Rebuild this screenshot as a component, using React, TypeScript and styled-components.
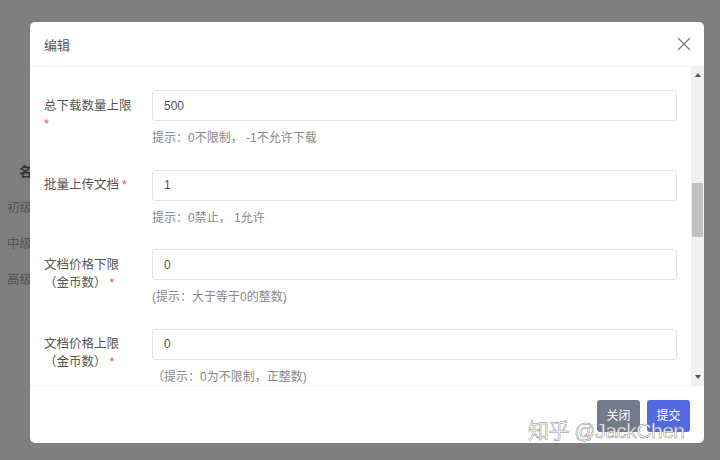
import React from "react"
import styled, { createGlobalStyle } from "styled-components"

const GlobalStyle = createGlobalStyle`
  html, body {
    margin: 0;
    padding: 0;
    width: 720px;
    height: 460px;
    overflow: hidden;
    background: #fff;
    font-family: "Liberation Sans", "Noto Sans CJK SC", sans-serif;
  }
`

const Page = styled.div`
  position: relative;
  width: 720px;
  height: 460px;
  overflow: hidden;
`

const BackTable = styled.div`
  display: flex;
  flex-direction: column;
  padding: 161px 0 0 7px;
  gap: 17px;
  font-size: 12.5px;
  color: #a6a6a6;
`

const BackHead = styled.div`
  padding-left: 12px;
  font-weight: bold;
  font-size: 13px;
  color: #666;
`

const Overlay = styled.div`
  position: absolute;
  inset: 0;
  background: rgba(0, 0, 0, 0.5);
  display: flex;
  padding: 22px 16px 17px 30px;
`

const Modal = styled.div`
  flex: 1;
  display: flex;
  flex-direction: column;
  background: #fff;
  border-radius: 5px;
  overflow: hidden;
`

const Header = styled.div`
  height: 44px;
  display: flex;
  align-items: center;
  justify-content: space-between;
  padding: 0 12px 0 14px;
  border-bottom: 1px solid #f2f2f2;
`

const Title = styled.span`
  font-size: 13px;
  color: #555;
`

const CloseBtn = styled.button`
  border: none;
  background: none;
  padding: 0;
  width: 16px;
  height: 16px;
  display: flex;
  align-items: center;
  justify-content: center;
  cursor: pointer;
`

const Body = styled.div`
  flex: 1;
  display: flex;
  min-height: 0;
`

const Content = styled.div`
  flex: 1;
  overflow: hidden;
  padding: 23px 14px 0 14px;
`

const Scrollbar = styled.div`
  width: 13px;
  background: #f1f1f1;
  display: flex;
  flex-direction: column;
  align-items: center;
  padding: 6px 0;
  box-sizing: border-box;
`

const Arrow = styled.div<{ $down?: boolean }>`
  width: 0;
  height: 0;
  border-left: 3px solid transparent;
  border-right: 3px solid transparent;
  ${(p) => (p.$down ? "border-top: 4px solid #505050;" : "border-bottom: 4px solid #505050;")}
`

const Track = styled.div`
  flex: 1;
  width: 100%;
  padding: 106px 1px 0;
  box-sizing: border-box;
`

const Thumb = styled.div`
  height: 54px;
  background: #c1c1c1;
`

const FormItem = styled.div`
  display: grid;
  grid-template-columns: 108px 1fr;
  margin-bottom: 22.5px;
`

const Label = styled.div`
  font-size: 12.5px;
  line-height: 18px;
  color: #555;
  padding-top: 6.5px;
`

const Star = styled.span<{ $flush?: boolean }>`
  color: #e0505a;
  margin-left: ${(p) => (p.$flush ? 0 : 3)}px;
`

const Field = styled.div`
  display: flex;
  flex-direction: column;
`

const Input = styled.input`
  height: 31px;
  box-sizing: border-box;
  border: 1px solid #e4e4e4;
  border-radius: 3px;
  padding: 0 11px;
  font-family: inherit;
  font-size: 12px;
  color: #555;
  outline: none;
`

const Hint = styled.div`
  margin-top: 8px;
  font-size: 12px;
  line-height: 18px;
  color: #888;
`

const Footer = styled.div`
  height: 58px;
  box-sizing: border-box;
  border-top: 1px solid #eee;
  display: flex;
  justify-content: flex-end;
  align-items: flex-start;
  gap: 7px;
  padding: 14px 14px 0 0;
`

const Button = styled.button<{ $primary?: boolean }>`
  width: 43px;
  height: 32px;
  border: none;
  border-radius: 3px;
  padding-bottom: 4px;
  font-family: inherit;
  font-size: 12px;
  color: #fff;
  background: ${(p) => (p.$primary ? "#5468e2" : "#737a8b")};
  cursor: pointer;
`

const Watermark = styled.div`
  position: absolute;
  left: 528px;
  top: 414px;
  font-size: 21px;
  color: rgba(255, 255, 255, 0.92);
  -webkit-text-stroke: 0.5px #8a8a8a;
  letter-spacing: -0.5px;
  white-space: nowrap;
  pointer-events: none;
`

type Item = {
  label: React.ReactNode
  value: string
  hint: string
}

const items: Item[] = [
  { label: <>总下载数量上限<br /><Star $flush>*</Star></>, value: "500", hint: "提示：0不限制， -1不允许下载" },
  { label: <>批量上传文档<Star>*</Star></>, value: "1", hint: "提示：0禁止， 1允许" },
  { label: <>文档价格下限<br />（金币数）<Star>*</Star></>, value: "0", hint: "(提示：大于等于0的整数)" },
  { label: <>文档价格上限<br />（金币数）<Star>*</Star></>, value: "0", hint: "（提示：0为不限制，正整数)" },
]

export default function App() {
  return (
    <Page>
      <GlobalStyle />
      <BackTable>
        <BackHead>名</BackHead>
        <div>初级</div>
        <div>中级</div>
        <div>高级</div>
      </BackTable>
      <Overlay>
        <Modal>
          <Header>
            <Title>编辑</Title>
            <CloseBtn aria-label="关闭">
              <svg width="14" height="14" viewBox="0 0 14 14">
                <path d="M1 1L13 13M13 1L1 13" stroke="#808080" strokeWidth="1.4" fill="none" />
              </svg>
            </CloseBtn>
          </Header>
          <Body>
            <Content>
              {items.map((it, i) => (
                <FormItem key={i}>
                  <Label>{it.label}</Label>
                  <Field>
                    <Input defaultValue={it.value} />
                    <Hint>{it.hint}</Hint>
                  </Field>
                </FormItem>
              ))}
            </Content>
            <Scrollbar>
              <Arrow />
              <Track>
                <Thumb />
              </Track>
              <Arrow $down />
            </Scrollbar>
          </Body>
          <Footer>
            <Button>关闭</Button>
            <Button $primary>提交</Button>
          </Footer>
        </Modal>
      </Overlay>
      <Watermark>知乎 @JackChen</Watermark>
    </Page>
  )
}
